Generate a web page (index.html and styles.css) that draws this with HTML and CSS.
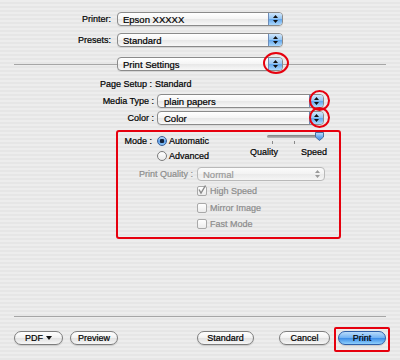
FILE: index.html
```html
<!DOCTYPE html>
<html lang="en">
<head>
  <meta charset="UTF-8" />
  <title>Print</title>
  <link rel="stylesheet" href="styles.css">
</head>
<body>
  <div class="dialog">
    <!-- Printer / presets -->
    <div class="field">
      <span class="field-label">Printer:</span>
      <div class="popup">
        <span class="popup-text">Epson XXXXX</span>
        <span class="popup-arrows"><svg width="5" height="8" viewBox="0 0 5 8"><path d="M0 3L2.5 0L5 3ZM0 5L2.5 8L5 5Z" fill="#111"/></svg></span>
      </div>
    </div>
    <div class="field presets">
      <span class="field-label">Presets:</span>
      <div class="popup">
        <span class="popup-text">Standard</span>
        <span class="popup-arrows"><svg width="5" height="8" viewBox="0 0 5 8"><path d="M0 3L2.5 0L5 3ZM0 5L2.5 8L5 5Z" fill="#111"/></svg></span>
      </div>
    </div>

    <!-- Pane selector -->
    <div class="pane-bar">
      <span class="rule"></span>
      <div class="popup">
        <span class="popup-text">Print Settings</span>
        <span class="popup-arrows"><svg width="5" height="8" viewBox="0 0 5 8"><path d="M0 3L2.5 0L5 3ZM0 5L2.5 8L5 5Z" fill="#111"/></svg></span>
        <span class="ring ring-pane"></span>
      </div>
      <span class="rule"></span>
    </div>

    <div class="pane">
      <div class="pane-row info">
        <span class="pane-label">Page Setup :</span>
        <span>Standard</span>
      </div>
      <div class="pane-row media">
        <span class="pane-label">Media Type :</span>
        <div class="popup wide">
          <span class="popup-text">plain papers</span>
          <span class="popup-arrows"><svg width="5" height="8" viewBox="0 0 5 8"><path d="M0 3L2.5 0L5 3ZM0 5L2.5 8L5 5Z" fill="#111"/></svg></span>
          <span class="ring ring-small"></span>
        </div>
      </div>
      <div class="pane-row color">
        <span class="pane-label">Color :</span>
        <div class="popup wide">
          <span class="popup-text">Color</span>
          <span class="popup-arrows"><svg width="5" height="8" viewBox="0 0 5 8"><path d="M0 3L2.5 0L5 3ZM0 5L2.5 8L5 5Z" fill="#111"/></svg></span>
          <span class="ring ring-small"></span>
        </div>
      </div>

      <!-- Mode group (highlighted) -->
      <div class="mode-box">
        <div class="mode-row">
          <div class="mode-left">
            <span class="mode-label">Mode :</span>
            <label class="radio"><span class="radio-dot on"></span>Automatic</label>
            <span></span>
            <label class="radio"><span class="radio-dot"></span>Advanced</label>
          </div>
          <div class="slider">
            <div class="slider-track">
              <span class="slider-thumb"><svg width="9" height="9" viewBox="0 0 9 9"><defs><linearGradient id="thumb" x1="0" y1="0" x2="0" y2="1"><stop offset="0" stop-color="#c6e2fb"/><stop offset="0.5" stop-color="#6eaef0"/><stop offset="1" stop-color="#3f86de"/></linearGradient></defs><path d="M0.5 0.5H8.5V5L4.5 8.5L0.5 5Z" fill="url(#thumb)" stroke="#4a6c9c"/></svg></span>
            </div>
            <div class="slider-ticks"><span class="tick"></span><span class="tick"></span></div>
            <div class="slider-labels"><span>Quality</span><span>Speed</span></div>
          </div>
        </div>

        <div class="quality-row">
          <span class="quality-label">Print Quality :</span>
          <div class="popup disabled">
            <span class="popup-text">Normal</span>
            <span class="popup-arrows"><svg width="5" height="8" viewBox="0 0 5 8"><path d="M0 3L2.5 0L5 3ZM0 5L2.5 8L5 5Z" fill="#9a9a9a"/></svg></span>
          </div>
        </div>

        <div class="checks">
          <label class="check"><span class="check-box"><svg width="10" height="10" viewBox="0 0 10 10"><path d="M2 4.5L4 8L8.5 0.5" fill="none" stroke="#8a8a8a" stroke-width="1.4"/></svg></span>High Speed</label>
          <label class="check"><span class="check-box"></span>Mirror Image</label>
          <label class="check"><span class="check-box"></span>Fast Mode</label>
        </div>
      </div>
    </div>

    <!-- Bottom buttons -->
    <div class="bottom-rule"></div>
    <div class="buttons">
      <button class="btn btn-pdf">PDF <svg width="6" height="4" viewBox="0 0 6 4"><path d="M0 0H6L3 4Z" fill="#111"/></svg></button>
      <button class="btn btn-preview">Preview</button>
      <button class="btn btn-standard">Standard</button>
      <button class="btn btn-cancel">Cancel</button>
      <div class="print-wrap">
        <button class="btn btn-print">Print</button>
        <span class="print-ring"></span>
      </div>
    </div>
  </div>
</body>
</html>
```

FILE: styles.css
```css
/* Reset and base */
* {
  box-sizing: border-box;
  margin: 0;
  padding: 0;
}

html,
body {
  width: 400px;
  height: 360px;
  overflow: hidden;
}

body {
  font-family: 'Liberation Sans', Arial, sans-serif;
  font-size: 9px;
  color: #000;
  -webkit-text-stroke: 0.2px currentColor;
  background: repeating-linear-gradient(to bottom, #ededed 0, #ededed 2px, #e6e6e6 2px, #e6e6e6 4px);
}

.dialog {
  display: flex;
  flex-direction: column;
  height: 360px;
  padding: 12px 14px 15px;
}

/* Popup menus */
.popup {
  position: relative;
  display: flex;
  align-items: center;
  width: 166px;
  height: 14px;
  border: 1px solid #8a8a8a;
  border-radius: 4px;
  background: linear-gradient(#ffffff, #f4f4f4 50%, #e7e7e7 51%, #f8f8f8);
  box-shadow: 0 1px 0 rgba(0, 0, 0, 0.08);
}

.popup.wide {
  width: 167px;
}

.popup-text {
  flex: 1;
  padding-left: 5px;
  font-size: 9.5px;
  white-space: nowrap;
}

.popup-arrows {
  width: 14px;
  align-self: stretch;
  display: flex;
  align-items: center;
  justify-content: center;
  border-left: 1px solid #6d8cb8;
  border-radius: 0 3px 3px 0;
  background: linear-gradient(#cfe6fc, #93c4f2 50%, #62a6ec 51%, #acd8fc);
}

.popup.disabled {
  width: 128px;
  height: 14px;
  border-color: #b9b9b9;
  color: #9a9a9a;
  background: linear-gradient(#fbfbfb, #f2f2f2 50%, #eaeaea 51%, #f5f5f5);
  box-shadow: none;
}

.popup.disabled .popup-arrows {
  border-left: none;
  background: none;
}

/* Red annotation rings */
.ring {
  position: absolute;
  border: 2px solid #e6000e;
  border-radius: 50%;
}

.ring-pane {
  left: 145px;
  top: -6px;
  width: 26px;
  height: 22px;
}

.ring-small {
  left: 151px;
  top: -5px;
  width: 21px;
  height: 21px;
}

/* Top fields */
.field {
  display: flex;
  align-items: center;
}

.field-label {
  width: 97px;
  margin-right: 6px;
  text-align: right;
}

.presets {
  margin-top: 7px;
}

.pane-bar {
  display: flex;
  align-items: center;
  margin-top: 10px;
}

.rule {
  flex: 1;
  height: 1px;
  background: #a6a6a6;
}

/* Pane contents */
.pane {
  margin-top: 6px;
}

.pane-row {
  display: flex;
  align-items: center;
}

.pane-label {
  width: 140px;
  margin-right: 3px;
  text-align: right;
}

.info {
  height: 13px;
  padding-left: 86px;
}

.info .pane-label {
  width: auto;
}

.media {
  margin-top: 4px;
}

.media .popup-text,
.color .popup-text {
  padding-left: 6px;
}

.color {
  margin-top: 3px;
}

.mode-box {
  width: 225px;
  height: 109px;
  margin: 5px 0 0 102px;
  border: 2px solid #e6000e;
  border-radius: 3px;
}

.mode-row {
  display: flex;
}

.mode-left {
  display: grid;
  grid-template-columns: 34px auto;
  grid-auto-rows: 15px;
  column-gap: 5px;
  align-items: center;
  margin-top: 1px;
}

.mode-label {
  text-align: right;
}

.radio {
  display: flex;
  align-items: center;
  gap: 2px;
}

.radio-dot {
  width: 10px;
  height: 10px;
  border-radius: 50%;
  border: 1px solid #7c7c7c;
  background: linear-gradient(#ffffff, #e9e9e9);
}

.radio-dot.on {
  border-color: #3d5f94;
  background: radial-gradient(circle, #15243c 0, #15243c 2px, transparent 2.5px),
    linear-gradient(#bcdcfb, #5e9fe8 55%, #8dc6f8);
}

/* Quality / speed slider */
.slider {
  width: 77px;
  margin-left: auto;
  margin-right: 12px;
}

.slider-track {
  position: relative;
  width: 55px;
  height: 3px;
  margin: 3px 0 0 17px;
  border-radius: 2px;
  background: linear-gradient(#7e7e7e, #bcbcbc);
}

.slider-thumb {
  position: absolute;
  left: 48px;
  top: -3px;
  line-height: 0;
}

.slider-ticks {
  display: flex;
  gap: 21px;
  margin: 3px 0 0 22px;
  height: 3px;
}

.tick {
  width: 1px;
  height: 3px;
  background: #8a8a8a;
}

.slider-labels {
  display: flex;
  justify-content: space-between;
  margin-top: 3px;
}

/* Print quality */
.quality-row {
  display: flex;
  align-items: center;
  margin-top: 4px;
}

.quality-label {
  width: 75px;
  margin-right: 4px;
  text-align: right;
  color: #8c8c8c;
}

.checks {
  margin: 2px 0 0 79px;
}

.check {
  display: flex;
  align-items: center;
  gap: 3px;
  height: 16.5px;
  color: #8c8c8c;
}

.check-box {
  width: 10px;
  height: 10px;
  border: 1px solid #a9a9a9;
  border-radius: 2px;
  background: linear-gradient(#ffffff, #ececec);
  line-height: 0;
}

.check-box svg {
  margin: -2px 0 0 -1px;
}

/* Bottom buttons */
.bottom-rule {
  margin-top: auto;
  height: 1px;
  background: #a6a6a6;
}

.buttons {
  display: flex;
  align-items: center;
  margin-top: 14px;
}

.btn {
  display: flex;
  align-items: center;
  justify-content: center;
  gap: 3px;
  height: 14px;
  font: inherit;
  color: #000;
  border: 1px solid #7d7d7d;
  border-radius: 8px;
  background: linear-gradient(#fefefe, #f1f1f1 50%, #e1e1e1 51%, #f6f6f6);
  box-shadow: 0 1px 1px rgba(0, 0, 0, 0.15);
}

.btn-pdf {
  width: 49px;
}

.btn-preview {
  width: 48px;
  margin-left: 7px;
}

.btn-standard {
  width: 57px;
  margin-left: auto;
}

.btn-cancel {
  width: 51px;
  margin-left: 25px;
}

.print-wrap {
  position: relative;
  margin-left: 8px;
}

.btn-print {
  width: 48px;
  border-color: #2f5fa8;
  background: linear-gradient(#b9dcfb, #6fb0f2 50%, #3a8ae6 51%, #8fd0fd);
}

.print-ring {
  position: absolute;
  left: -4px;
  right: -4px;
  top: -4px;
  bottom: -7px;
  border: 2px solid #e6000e;
  border-radius: 2px;
}
```
